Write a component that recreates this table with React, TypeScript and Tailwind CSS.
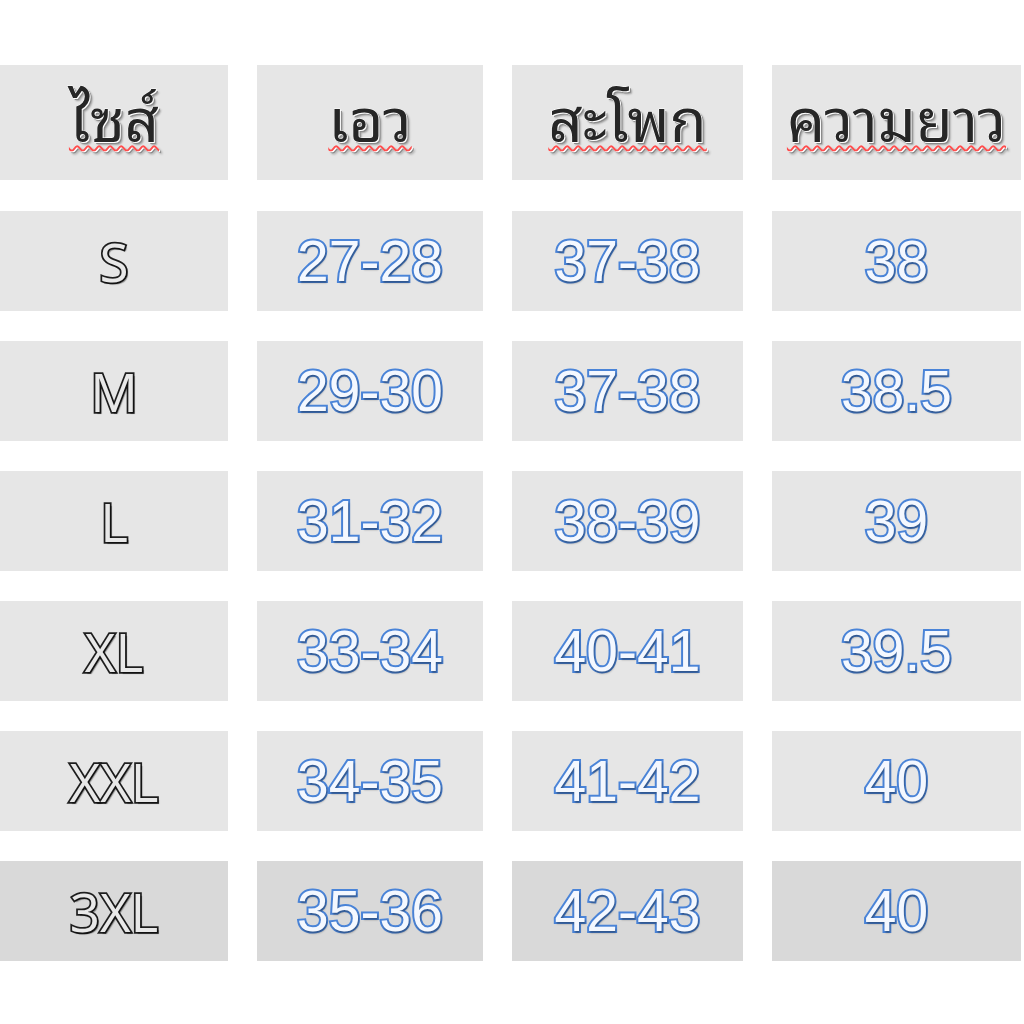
import React from "react";

const rows = [
  ["S", "27-28", "37-38", "38"],
  ["M", "29-30", "37-38", "38.5"],
  ["L", "31-32", "38-39", "39"],
  ["XL", "33-34", "40-41", "39.5"],
  ["XXL", "34-35", "41-42", "40"],
  ["3XL", "35-36", "42-43", "40"],
];

const headers = ["ไซส์", "เอว", "สะโพก", "ความยาว"];

export default function App() {
  return (
    <div className="w-[1024px] h-[1024px] bg-white pt-[65px]">
      <div className="grid grid-cols-[228px_226px_231px_249px] gap-x-[29px] gap-y-[30px]">
        {headers.map((h) => (
          <div
            key={h}
            className="h-[115px] mb-[1px] pb-[16px] bg-[#e6e6e6] flex items-center justify-center"
          >
            <span className="font-['Noto_Sans_Thai_Looped','Loma','Tlwg_Typo','Garuda','Norasi','Noto_Sans_Thai',sans-serif] font-normal text-[60px] leading-none text-[#262626] underline decoration-wavy decoration-[#ff4d4d] decoration-[1.5px] underline-offset-[3px] [-webkit-text-stroke:0.6px_#fff] [paint-order:stroke_fill] [text-shadow:1px_1px_0_#fff,2px_2px_0_#8a8a8a,3px_3px_2px_rgba(0,0,0,0.3)]">
              {h}
            </span>
          </div>
        ))}
        {rows.map((r, i) => {
          const bg = i === rows.length - 1 ? "bg-[#d9d9d9]" : "bg-[#e6e6e6]";
          return (
            <React.Fragment key={i}>
              <div className={`h-[100px] ${bg} flex items-center justify-center`}>
                <span className="font-['Open_Sans','Noto_Sans',sans-serif] text-[53px] leading-none text-[#e8e8e8] [-webkit-text-stroke:3.5px_#1e1e1e] [paint-order:stroke_fill] [text-shadow:2px_2px_1px_rgba(0,0,0,0.4)]">
                  {r[0]}
                </span>
              </div>
              {r.slice(1).map((v, j) => (
                <div key={j} className={`h-[100px] ${bg} flex items-center justify-center`}>
                  <span className="font-['Liberation_Sans',Arial,sans-serif] text-[57px] leading-none text-[#f4f8ff] [-webkit-text-stroke:4px_#4a84d8] [paint-order:stroke_fill] [text-shadow:1px_2px_2px_rgba(0,0,0,0.35)]">
                    {v}
                  </span>
                </div>
              ))}
            </React.Fragment>
          );
        })}
      </div>
    </div>
  );
}
